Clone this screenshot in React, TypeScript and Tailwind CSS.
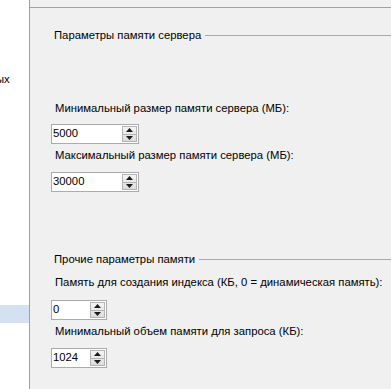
import React from "react";

const font = { fontFamily: '"Liberation Sans", Arial, sans-serif' };

function Spinner({ value, wide }: { value: string; wide?: boolean }) {
  return (
    <div
      className={`ml-[21px] flex h-[20px] items-stretch border border-[#a9abb0] bg-white ${
        wide ? "w-[88px]" : "w-[56px]"
      }`}
    >
      <div className="flex flex-1 items-center pl-[1px] text-[11.3px] leading-none text-black">{value}</div>
      <div className="my-[1px] mr-[1px] flex w-[15px] flex-col border border-[#b4b4b4] bg-gradient-to-b from-[#f4f4f4] to-[#dcdcdc]">
        <div className="flex flex-1 items-center justify-center border-b border-[#b4b4b4]">
          <svg width="7" height="4" viewBox="0 0 7 4">
            <path d="M0 4 L3.5 0 L7 4 Z" fill="#1a1a1a" />
          </svg>
        </div>
        <div className="flex flex-1 items-center justify-center">
          <svg width="7" height="4" viewBox="0 0 7 4">
            <path d="M0 0 L3.5 4 L7 0 Z" fill="#1a1a1a" />
          </svg>
        </div>
      </div>
    </div>
  );
}

function GroupHeader({ title }: { title: string }) {
  return (
    <div className="ml-[24px] flex h-[16px] items-center">
      <span className="text-[11.3px] leading-[16px] text-black">{title}</span>
      <div className="ml-[4px] h-px flex-1 bg-[#a8a8a8]" />
    </div>
  );
}

function Label({ text }: { text: string }) {
  return <div className="ml-[25px] h-[16px] text-[11.3px] leading-[16px] whitespace-nowrap text-black">{text}</div>;
}

export default function App() {
  return (
    <div className="flex h-[389px] w-[391px] overflow-hidden bg-[#f0f0f0]" style={font}>
      <div className="flex w-[30px] shrink-0 flex-col overflow-hidden border-r border-[#a0a0a0] bg-white">
        <div className="mt-[71px] -ml-[4px] h-[16px] text-[11.3px] leading-[16px] text-black">ых</div>
        <div className="mt-[218px] h-[18px] bg-[#d3e1f0]" />
      </div>
      <div className="flex flex-1 flex-col">
        <div className="mt-[7px] h-px bg-[#a0a0a0]" />
        <div className="mt-[19px]">
          <GroupHeader title="Параметры памяти сервера" />
        </div>
        <div className="mt-[57px]">
          <Label text="Минимальный размер памяти сервера (МБ):" />
        </div>
        <div className="mt-[8px]">
          <Spinner value="5000" wide />
        </div>
        <div className="mt-[3px]">
          <Label text="Максимальный размер памяти сервера (МБ):" />
        </div>
        <div className="mt-[9px]">
          <Spinner value="30000" wide />
        </div>
        <div className="mt-[59px]">
          <GroupHeader title="Прочие параметры памяти" />
        </div>
        <div className="mt-[7px]">
          <Label text="Память для создания индекса (КБ, 0 = динамическая память):" />
        </div>
        <div className="mt-[10px]">
          <Spinner value="0" />
        </div>
        <div className="mt-[3px]">
          <Label text="Минимальный объем памяти для запроса (КБ):" />
        </div>
        <div className="mt-[9px]">
          <Spinner value="1024" />
        </div>
      </div>
    </div>
  );
}
